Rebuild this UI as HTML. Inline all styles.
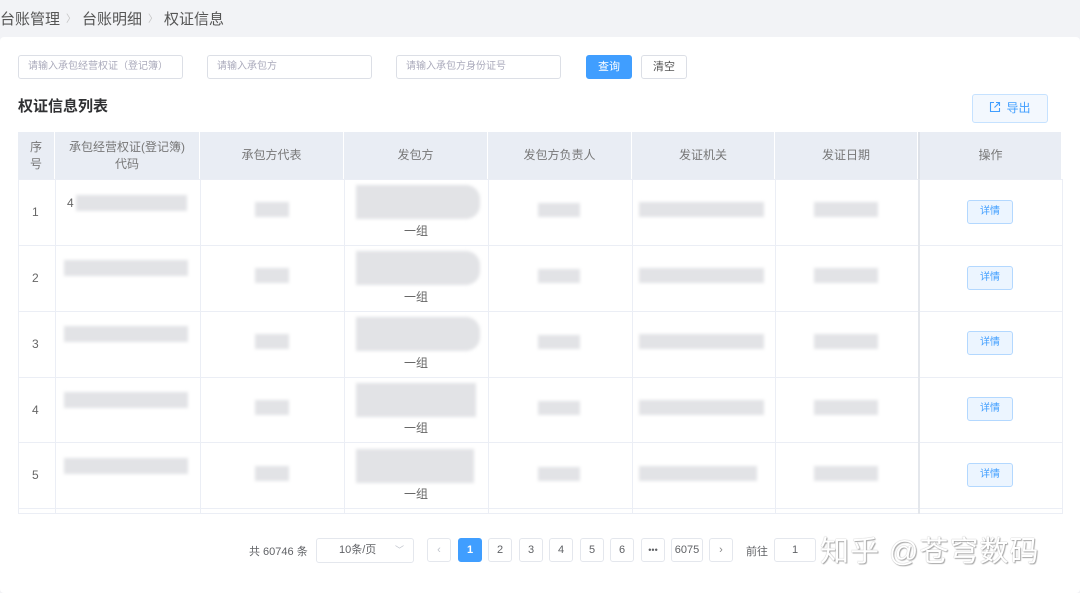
<!DOCTYPE html>
<html><head><meta charset="utf-8"><style>
*{margin:0;padding:0;box-sizing:border-box}
body{width:1080px;height:593px;background:#f2f3f6;font-family:"Liberation Sans","Noto Sans CJK SC",sans-serif;position:relative;overflow:hidden;color:#606266}
.a{position:absolute}
.bc{left:0;top:8px;font-size:15px;color:#555}
.bc span.s{color:#c4c4c4;margin:0 6px;font-size:10px;vertical-align:2px}
.card{left:0;top:37px;width:1080px;height:556px;background:#fff;border-radius:4px}
.inp{height:24px;border:1px solid #dcdfe6;border-radius:3px;font-size:10px;color:#aab;padding:0 9px;line-height:22px;background:#fff}
.btn{height:24px;border-radius:3px;font-size:11px;text-align:center;line-height:22px}
.th{top:132px;height:47px;background:#e9edf4;font-size:12px;color:#777;display:flex;align-items:center;justify-content:center;text-align:center;line-height:17px;border-right:1px solid #fff}
.hl{left:18px;width:1044px;height:1px;background:#ebeef5}
.vl{width:1px;background:#ebeef5;top:179px;height:335px}
.bl{background:#e2e3e6;filter:blur(1.5px)}
.det{width:46px;height:24px;background:#ecf5ff;border:1px solid #b3d8ff;border-radius:3px;font-size:10px;color:#409eff;text-align:center;line-height:22px}
.pg{top:538px;height:24px;min-width:24px;border:1px solid #e4e7ed;border-radius:3px;font-size:11px;text-align:center;line-height:22px;color:#606266;background:#fff}
.t{font-size:12px;color:#666}
</style></head><body>
<div class="a bc">台账管理<span class="s">〉</span>台账明细<span class="s">〉</span>权证信息</div>
<div class="a card"></div>
<div class="a inp" style="left:18px;top:55px;width:165px">请输入承包经营权证（登记簿）</div>
<div class="a inp" style="left:207px;top:55px;width:165px">请输入承包方</div>
<div class="a inp" style="left:396px;top:55px;width:165px">请输入承包方身份证号</div>
<div class="a btn" style="left:586px;top:55px;width:46px;background:#409eff;color:#fff;border:1px solid #409eff">查询</div>
<div class="a btn" style="left:641px;top:55px;width:46px;border:1px solid #dcdfe6;color:#555">清空</div>
<div class="a" style="left:18px;top:95px;font-size:15px;font-weight:bold;color:#303133">权证信息列表</div>
<div class="a btn" style="left:972px;top:94px;width:76px;height:29px;line-height:27px;background:#f3f8fe;border:1px solid #c6e2ff;color:#409eff;font-size:12px">
<svg width="12" height="12" viewBox="0 0 12 12" style="vertical-align:-1px;margin-right:5px"><path d="M5 1.5H1.5v9h9V7M7 1.5h3.5V5M10.5 1.5L5.5 6.5" fill="none" stroke="#409eff" stroke-width="1.1"/></svg>导出</div>

<div class="a th" style="left:18px;width:37px">序<br>号</div>
<div class="a th" style="left:55px;width:145px">承包经营权证(登记簿)<br>代码</div>
<div class="a th" style="left:200px;width:144px">承包方代表</div>
<div class="a th" style="left:344px;width:144px">发包方</div>
<div class="a th" style="left:488px;width:144px">发包方负责人</div>
<div class="a th" style="left:632px;width:143px">发证机关</div>
<div class="a th" style="left:775px;width:143px">发证日期</div>
<div class="a th" style="left:918px;width:144px;border-left:2px solid #dde1e8">操作</div>

<div class="a hl" style="top:179px"></div>
<div class="a hl" style="top:245px"></div>
<div class="a hl" style="top:311px"></div>
<div class="a hl" style="top:377px"></div>
<div class="a hl" style="top:442px"></div>
<div class="a hl" style="top:508px"></div>
<div class="a hl" style="top:513px"></div>
<div class="a vl" style="left:18px"></div>
<div class="a vl" style="left:55px"></div>
<div class="a vl" style="left:200px"></div>
<div class="a vl" style="left:344px"></div>
<div class="a vl" style="left:488px"></div>
<div class="a vl" style="left:632px"></div>
<div class="a vl" style="left:775px"></div>
<div class="a vl" style="left:918px;width:2px;background:#e4e7ec"></div>
<div class="a vl" style="left:1062px"></div>

<div class="a t" style="left:32px;top:205px">1</div>
<div class="a t" style="left:32px;top:271px">2</div>
<div class="a t" style="left:32px;top:337px">3</div>
<div class="a t" style="left:32px;top:403px">4</div>
<div class="a t" style="left:32px;top:468px">5</div>

<div class="a t" style="left:67px;top:196px">4</div>
<div class="a bl" style="left:76px;top:195px;width:111px;height:16px"></div>
<div class="a bl" style="left:64px;top:260px;width:124px;height:16px"></div>
<div class="a bl" style="left:64px;top:326px;width:124px;height:16px"></div>
<div class="a bl" style="left:64px;top:392px;width:124px;height:16px"></div>
<div class="a bl" style="left:64px;top:458px;width:124px;height:16px"></div>

<div class="a bl" style="left:255px;top:202px;width:34px;height:15px"></div>
<div class="a bl" style="left:255px;top:268px;width:34px;height:15px"></div>
<div class="a bl" style="left:255px;top:334px;width:34px;height:15px"></div>
<div class="a bl" style="left:255px;top:400px;width:34px;height:15px"></div>
<div class="a bl" style="left:255px;top:466px;width:34px;height:15px"></div>

<div class="a bl" style="left:356px;top:185px;width:124px;height:34px;border-radius:0 14px 14px 0"></div>
<div class="a bl" style="left:356px;top:251px;width:124px;height:34px;border-radius:0 14px 14px 0"></div>
<div class="a bl" style="left:356px;top:317px;width:124px;height:34px;border-radius:0 14px 14px 0"></div>
<div class="a bl" style="left:356px;top:383px;width:120px;height:34px"></div>
<div class="a bl" style="left:356px;top:449px;width:118px;height:34px"></div>
<div class="a t" style="left:404px;top:222px">一组</div>
<div class="a t" style="left:404px;top:288px">一组</div>
<div class="a t" style="left:404px;top:354px">一组</div>
<div class="a t" style="left:404px;top:419px">一组</div>
<div class="a t" style="left:404px;top:485px">一组</div>

<div class="a bl" style="left:538px;top:203px;width:42px;height:14px"></div>
<div class="a bl" style="left:538px;top:269px;width:42px;height:14px"></div>
<div class="a bl" style="left:538px;top:335px;width:42px;height:14px"></div>
<div class="a bl" style="left:538px;top:401px;width:42px;height:14px"></div>
<div class="a bl" style="left:538px;top:467px;width:42px;height:14px"></div>

<div class="a bl" style="left:639px;top:202px;width:125px;height:15px"></div>
<div class="a bl" style="left:639px;top:268px;width:125px;height:15px"></div>
<div class="a bl" style="left:639px;top:334px;width:125px;height:15px"></div>
<div class="a bl" style="left:639px;top:400px;width:125px;height:15px"></div>
<div class="a bl" style="left:639px;top:466px;width:118px;height:15px"></div>

<div class="a bl" style="left:814px;top:202px;width:64px;height:15px"></div>
<div class="a bl" style="left:814px;top:268px;width:64px;height:15px"></div>
<div class="a bl" style="left:814px;top:334px;width:64px;height:15px"></div>
<div class="a bl" style="left:814px;top:400px;width:64px;height:15px"></div>
<div class="a bl" style="left:814px;top:466px;width:64px;height:15px"></div>

<div class="a det" style="left:967px;top:200px">详情</div>
<div class="a det" style="left:967px;top:266px">详情</div>
<div class="a det" style="left:967px;top:331px">详情</div>
<div class="a det" style="left:967px;top:397px">详情</div>
<div class="a det" style="left:967px;top:463px">详情</div>

<div class="a" style="left:249px;top:543px;font-size:11px;color:#606266">共 60746 条</div>
<div class="a pg" style="left:316px;width:98px;height:25px;line-height:23px;text-align:left;padding-left:22px">10条/页<span style="position:absolute;right:9px;color:#c0c4cc;font-size:9px">﹀</span></div>
<div class="a pg" style="left:427px;color:#c0c4cc">‹</div>
<div class="a pg" style="left:458px;background:#409eff;border-color:#409eff;color:#fff;font-weight:bold">1</div>
<div class="a pg" style="left:488px">2</div>
<div class="a pg" style="left:519px">3</div>
<div class="a pg" style="left:549px">4</div>
<div class="a pg" style="left:580px">5</div>
<div class="a pg" style="left:610px">6</div>
<div class="a pg" style="left:641px;font-size:9px">•••</div>
<div class="a pg" style="left:671px;width:32px">6075</div>
<div class="a pg" style="left:709px;color:#888">›</div>
<div class="a" style="left:746px;top:543px;font-size:11px">前往</div>
<div class="a pg" style="left:774px;width:42px">1</div>
<div class="a" style="left:820px;top:528px;font-size:29px;color:#fff;text-shadow:0 0 1px #999,1px 1px 1px #aaa;letter-spacing:1px">知乎 @苍穹数码</div>
</body></html>
